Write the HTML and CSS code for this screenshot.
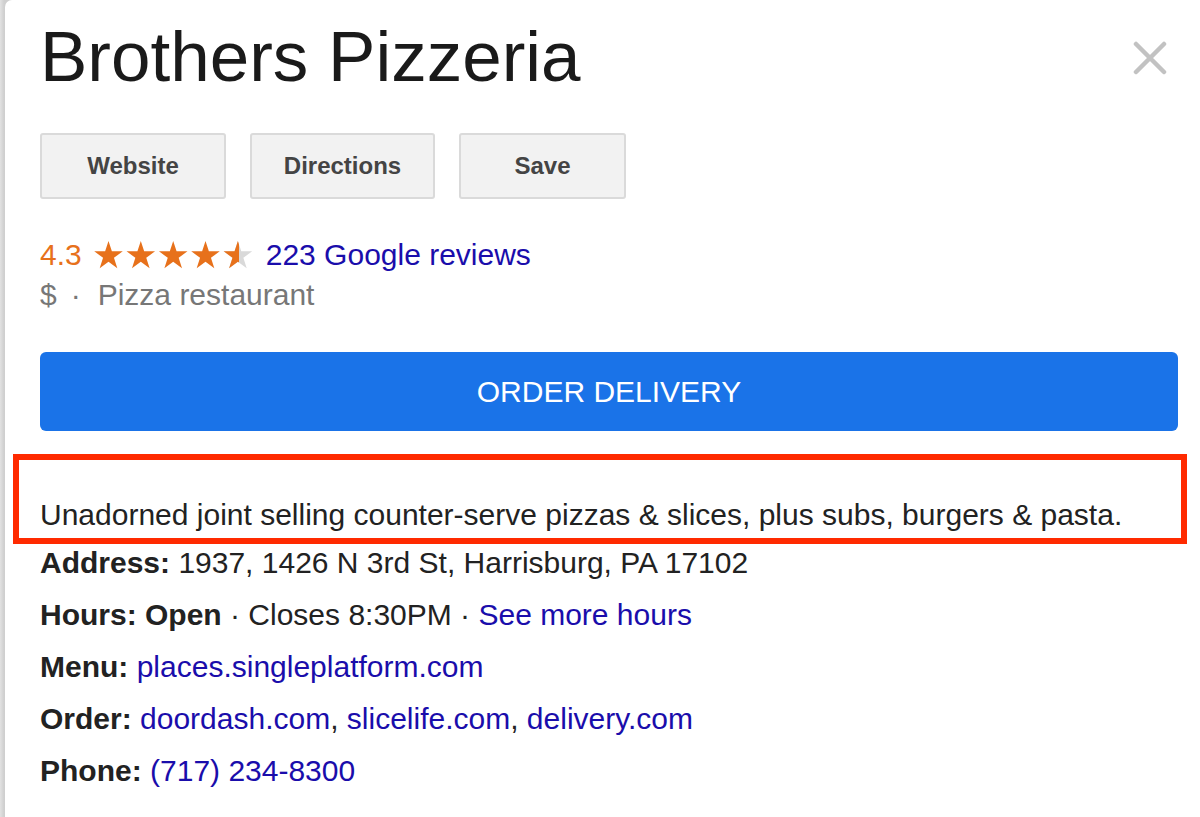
FILE: index.html
```html
<!DOCTYPE html>
<html lang="en">
<head>
<meta charset="utf-8">
<title>Brothers Pizzeria</title>
<link rel="stylesheet" href="styles.css">
</head>
<body>
<div class="card">
  <div class="header">
    <h1 class="title">Brothers Pizzeria</h1>
    <svg class="close" width="34" height="34" viewBox="0 0 34 34" aria-label="Close">
      <path d="M3 3 L31 31 M31 3 L3 31" stroke="#c2c2c2" stroke-width="4.5" stroke-linecap="round"/>
    </svg>
  </div>
  <div class="actions">
    <button class="btn btn-website">Website</button>
    <button class="btn btn-directions">Directions</button>
    <button class="btn btn-save">Save</button>
  </div>
  <div class="rating">
    <span class="score">4.3</span>
    <svg class="stars" width="160" height="28" viewBox="0 0 160 28">
      <defs>
        <path id="star" d="M0,-15 L3.37,-4.64 L14.27,-4.64 L5.45,1.77 L8.82,12.14 L0,5.73 L-8.82,12.14 L-5.45,1.77 L-14.27,-4.64 L-3.37,-4.64Z"/>
        <clipPath id="half"><rect x="0" y="0" width="145" height="28"/></clipPath>
      </defs>
      <use href="#star" transform="translate(14.5,15)" fill="#e7711b"/>
      <use href="#star" transform="translate(46.8,15)" fill="#e7711b"/>
      <use href="#star" transform="translate(79.2,15)" fill="#e7711b"/>
      <use href="#star" transform="translate(111.5,15)" fill="#e7711b"/>
      <use href="#star" transform="translate(143.9,15)" fill="#d9d9d9"/>
      <g clip-path="url(#half)"><use href="#star" transform="translate(143.9,15)" fill="#e7711b"/></g>
    </svg>
    <a class="link" href="#">223 Google reviews</a>
  </div>
  <div class="category"><span>$</span><span class="dot">·</span><span>Pizza restaurant</span></div>
  <button class="order">ORDER DELIVERY</button>
  <div class="desc">Unadorned joint selling counter-serve pizzas &amp; slices, plus subs, burgers &amp; pasta.</div>
  <div class="facts">
    <div class="fact"><b>Address:</b> 1937, 1426 N 3rd St, Harrisburg, PA 17102</div>
    <div class="fact"><b>Hours:</b> <b>Open</b> · Closes 8:30PM · <a class="link" href="#">See more hours</a></div>
    <div class="fact"><b>Menu:</b> <a class="link" href="#">places.singleplatform.com</a></div>
    <div class="fact"><b>Order:</b> <a class="link" href="#">doordash.com</a>, <a class="link" href="#">slicelife.com</a>, <a class="link" href="#">delivery.com</a></div>
    <div class="fact"><b>Phone:</b> <a class="link" href="#">(717) 234-8300</a></div>
  </div>
</div>
</body>
</html>
```

FILE: styles.css
```css
html, body {
  margin: 0;
  padding: 0;
}
body {
  background: linear-gradient(to right, #e2e2e2 0, #cfcfcf 4px, #cfcfcf 5px);
  font-family: "Liberation Sans", Arial, sans-serif;
  color: #222;
  min-height: 817px;
  overflow: hidden;
}
.card {
  margin-left: 5px;
  background: #fff;
  min-height: 817px;
  border-top-left-radius: 7px;
  padding: 14px 22px 0 35px;
  box-sizing: border-box;
}
.header {
  display: flex;
  justify-content: space-between;
  align-items: flex-start;
}
.title {
  margin: 0;
  font-size: 71px;
  font-weight: normal;
  line-height: 86px;
  color: #1a1a1a;
  letter-spacing: 0;
}
.close {
  margin-top: 27px;
  margin-right: 11px;
}
.actions {
  display: flex;
  gap: 24px;
  margin-top: 33px;
}
.btn {
  height: 66px;
  background: #f2f2f2;
  border: 2px solid #dadada;
  border-radius: 3px;
  font-family: "Liberation Sans", Arial, sans-serif;
  font-weight: bold;
  font-size: 24px;
  color: #444;
  padding: 0;
}
.btn-website { width: 186px; }
.btn-directions { width: 185px; }
.btn-save { width: 167px; }
.rating {
  display: flex;
  align-items: center;
  margin-top: 36px;
  height: 40px;
  font-size: 30px;
  line-height: 40px;
}
.score {
  color: #e7711b;
  margin-right: 12px;
}
.stars {
  margin-right: 12px;
}
.link {
  color: #1a0dab;
  text-decoration: none;
}
.category {
  display: flex;
  font-size: 30px;
  line-height: 40px;
  color: #777;
}
.dot {
  margin: 0 17px 0 14px;
}
.order {
  display: block;
  width: 100%;
  height: 79px;
  margin-top: 37px;
  background: #1a73e8;
  border: none;
  border-radius: 6px;
  color: #fff;
  font-family: "Liberation Sans", Arial, sans-serif;
  font-size: 30px;
  padding: 0;
}
.desc {
  margin: 23px -9px 0 -27px;
  border: 6px solid #ff2a00;
  padding: 38px 21px 6px;
  font-size: 30px;
  line-height: 34px;
  color: #222;
}
.facts {
  margin-top: -7px;
  font-size: 30px;
  line-height: 52px;
  color: #222;
}
.fact b {
  color: #222;
}
```
